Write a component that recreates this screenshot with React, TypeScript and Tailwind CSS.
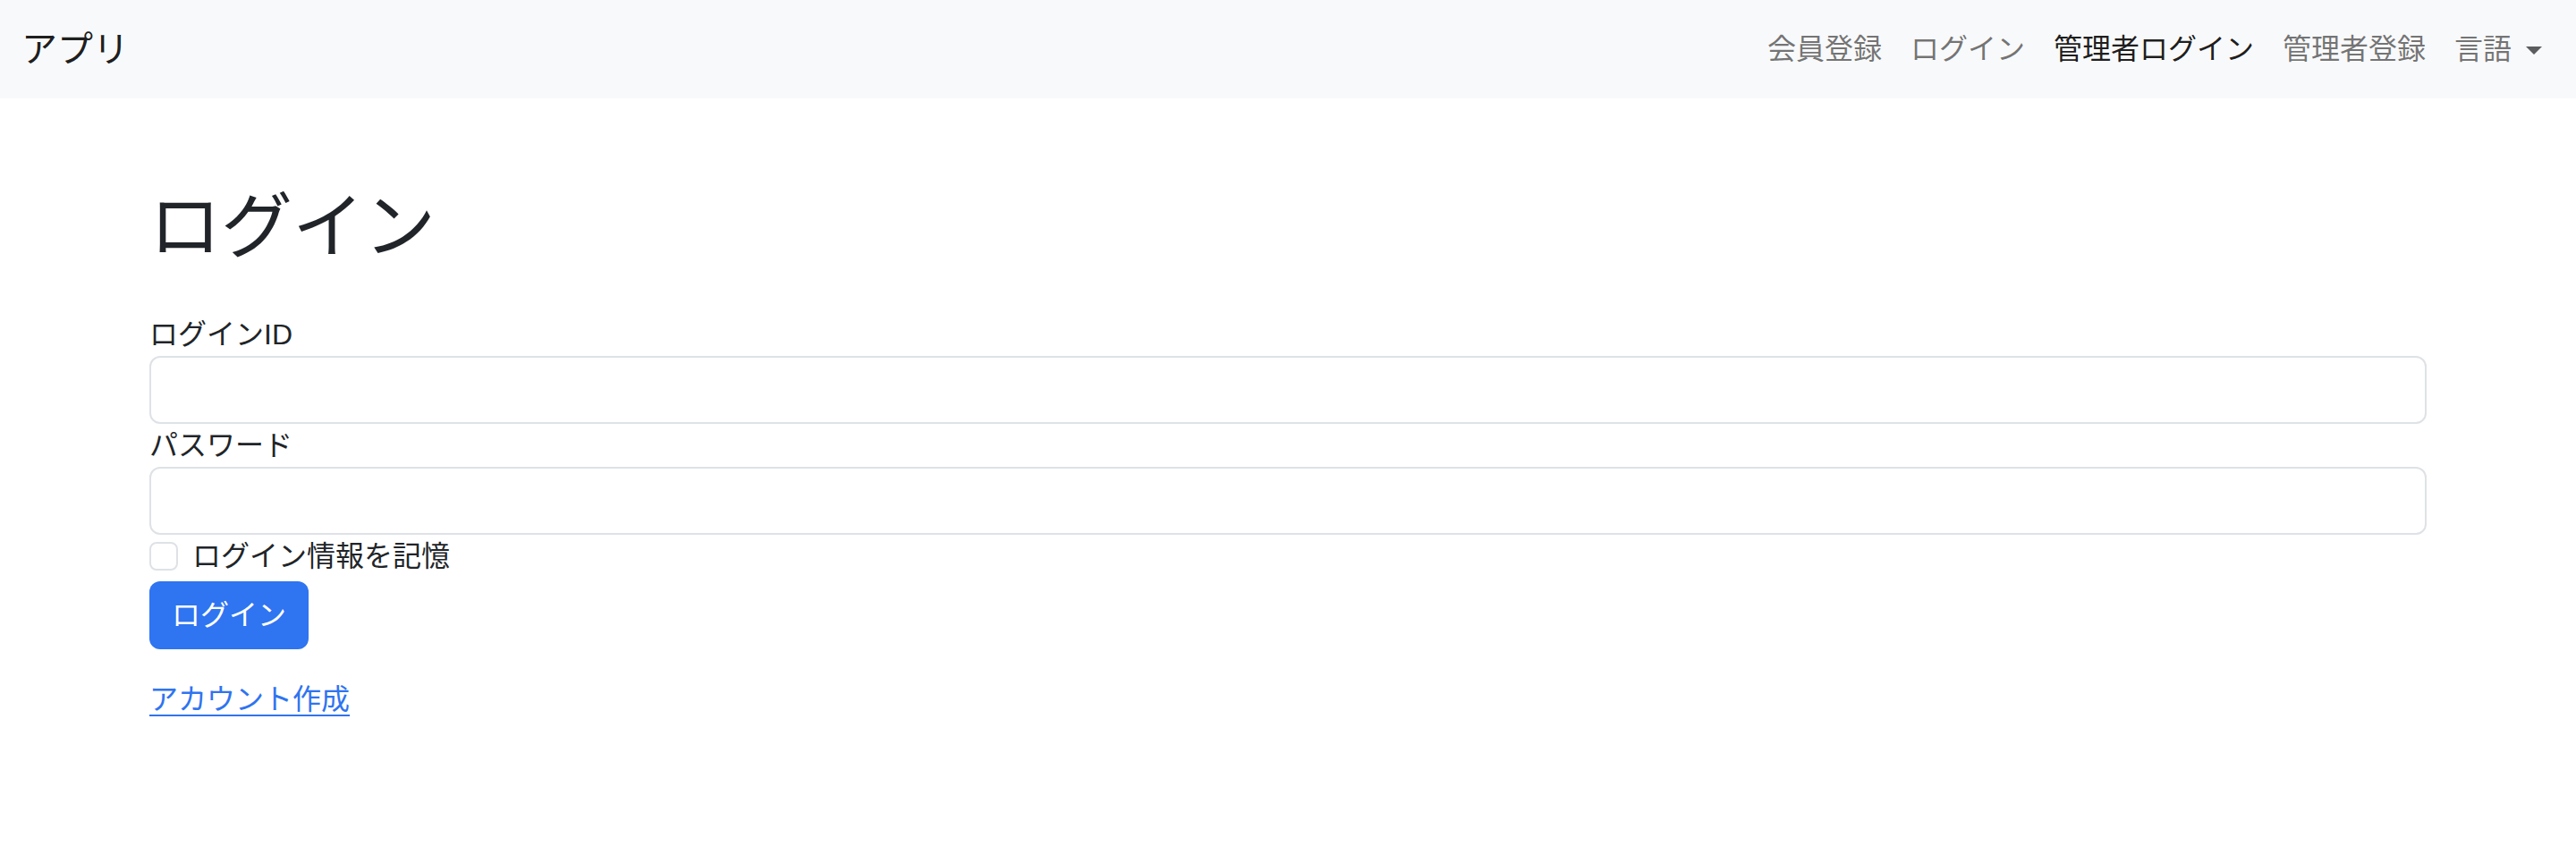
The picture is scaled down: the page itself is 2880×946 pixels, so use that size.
import React from "react";

const font = { fontFamily: "'Liberation Sans','Noto Sans CJK JP',sans-serif" };

export default function App() {
  return (
    <div className="min-h-[946px] bg-white text-[#212529]" style={font}>
      <nav className="flex h-[110px] items-center justify-between bg-[#f8f9fa] px-[24px]">
        <a className="text-[40px] leading-[60px] text-black/90">アプリ</a>
        <ul className="flex items-center text-[32px] leading-[48px]">
          <li><a className="block px-[16px] text-black/55">会員登録</a></li>
          <li><a className="block px-[16px] text-black/55">ログイン</a></li>
          <li><a className="block px-[16px] text-black/90">管理者ログイン</a></li>
          <li><a className="block px-[16px] text-black/55">管理者登録</a></li>
          <li>
            <a className="flex items-center pl-[16px] pr-[14px] text-black/55">
              言語
              <span className="ml-[16px] mt-[2px] h-0 w-0 border-x-[9px] border-t-[9px] border-x-transparent border-t-[#5c5d5e]" />
            </a>
          </li>
        </ul>
      </nav>
      <main className="mx-auto w-[2546px]">
        <h1 className="mt-[96px] text-[80px] font-normal leading-[96px]">ログイン</h1>
        <form className="mt-[48px] text-[32px] leading-[48px]">
          <label className="block">ログインID</label>
          <input className="block h-[76px] w-full rounded-[12px] border-2 border-[#dee2e6] bg-white px-[24px] outline-none" />
          <label className="block">パスワード</label>
          <input type="password" className="block h-[76px] w-full rounded-[12px] border-2 border-[#dee2e6] bg-white px-[24px] outline-none" />
          <div className="flex h-[48px] items-start">
            <span className="mt-[8px] h-[32px] w-[32px] rounded-[8px] border-2 border-[#dee2e6] bg-white" />
            <label className="ml-[16px]">ログイン情報を記憶</label>
          </div>
          <button type="button" className="mt-[4px] flex h-[76px] w-[178px] items-center justify-center rounded-[12px] bg-[#2f74f0] text-white">
            ログイン
          </button>
          <a className="mt-[32px] inline-block text-[#2f74f0] underline decoration-[2px] underline-offset-[6px]">アカウント作成</a>
        </form>
      </main>
    </div>
  );
}
